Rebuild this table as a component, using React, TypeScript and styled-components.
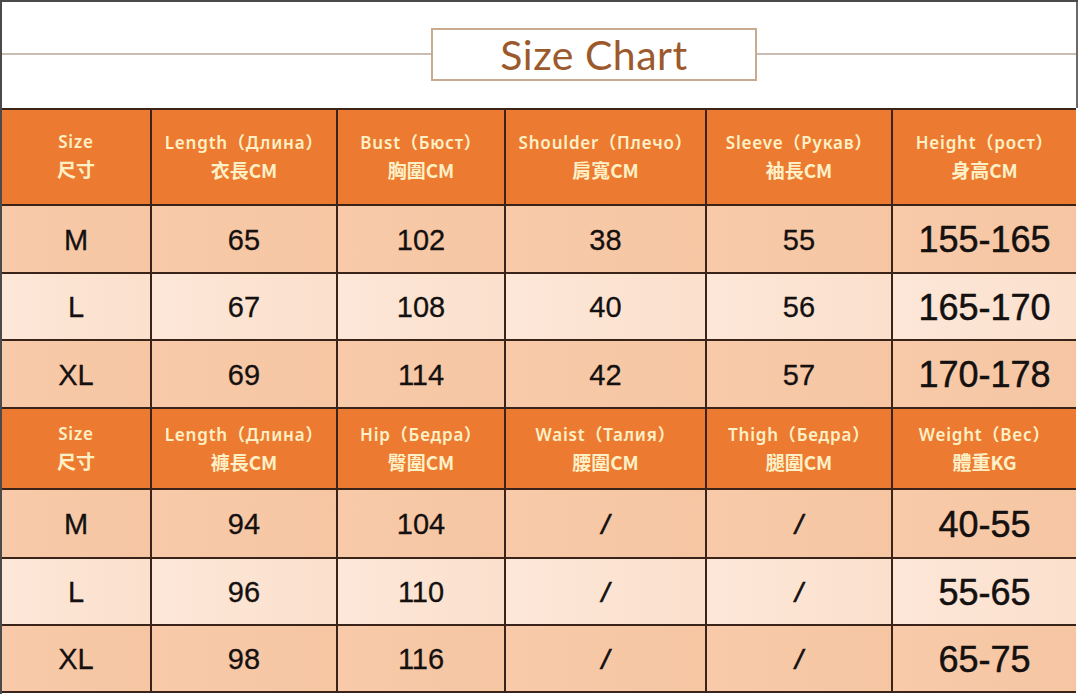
import styled, { createGlobalStyle } from "styled-components";

const GlobalStyle = createGlobalStyle`
  html, body {
    margin: 0;
    padding: 0;
    background: #ffffff;
  }
`;

const Frame = styled.div`
  width: 1078px;
  height: 694px;
  border-top: 2px solid #4a4a4a;
  border-left: 2px solid #4a4a4a;
  box-sizing: border-box;
  overflow: hidden;
  background: #ffffff;
`;

const TitleBand = styled.div`
  height: 106px;
  display: flex;
  align-items: center;
  padding-bottom: 2px;
  box-sizing: border-box;
  border-right: 2px solid #6a6a6a;
`;

const Rule = styled.div<{ $width?: number }>`
  flex: ${(p) => (p.$width ? `0 0 ${p.$width}px` : "1")};
  height: 2px;
  background: #c9bcb0;
`;

const TitleBox = styled.div`
  width: 326px;
  height: 53px;
  box-sizing: border-box;
  border: 2px solid #c8ab8e;
  display: flex;
  align-items: center;
  justify-content: center;
  font-family: "Lato", "Open Sans", sans-serif;
  font-size: 41px;
  color: #9c5a2c;
  letter-spacing: 0.5px;
`;

const Table = styled.div`
  display: grid;
  grid-template-columns: 148px 184px 166px 199px 184px 183px;
  grid-template-rows: 94px 66px 65px 66px 79px 67px 65px 65px;
  gap: 2px;
  padding: 2px;
  width: 1076px;
  box-sizing: border-box;
  margin-left: -2px;
  background: #3a2419;
`;

const HeadCell = styled.div`
  background: #ec7b31;
  display: flex;
  flex-direction: column;
  align-items: center;
  justify-content: center;
  gap: 5px;
  color: #fdf0c6;
  padding-bottom: 4px;
  box-sizing: border-box;
`;

const HeadEn = styled.div`
  font-family: "Noto Sans", "Noto Sans CJK SC", sans-serif;
  font-weight: 600;
  font-size: 17px;
  letter-spacing: 0.8px;
  white-space: nowrap;
`;

const HeadCn = styled.div`
  font-family: "Noto Sans CJK TC", "Noto Sans", sans-serif;
  font-weight: 700;
  font-size: 19px;
  line-height: 22px;
`;

const DataCell = styled.div<{ $light: boolean; $big?: boolean }>`
  background: ${(p) =>
    p.$light
      ? "linear-gradient(90deg, #fde7d8 0%, #fbe0cd 100%)"
      : "linear-gradient(90deg, #f8caa9 0%, #f6c6a3 100%)"};
  display: flex;
  align-items: center;
  justify-content: center;
  font-family: "Liberation Sans", Arial, sans-serif;
  font-size: ${(p) => (p.$big ? "36px" : "29px")};
  -webkit-text-stroke: ${(p) => (p.$big ? "0.5px" : "0.3px")} #141010;
  color: #141010;
  padding-top: 2px;
  box-sizing: border-box;
`;

const Slash = styled.span`
  font-style: italic;
  font-size: 28px;
  -webkit-text-stroke: 0.6px #141010;
`;

type Head = [string, string];

const head1: Head[] = [
  ["Size", "尺寸"],
  ["Length（Длина）", "衣長CM"],
  ["Bust（Бюст）", "胸圍CM"],
  ["Shoulder（Плечо）", "肩寬CM"],
  ["Sleeve（Рукав）", "袖長CM"],
  ["Height（рост）", "身高CM"],
];

const head2: Head[] = [
  ["Size", "尺寸"],
  ["Length（Длина）", "褲長CM"],
  ["Hip（Бедра）", "臀圍CM"],
  ["Waist（Талия）", "腰圍CM"],
  ["Thigh（Бедра）", "腿圍CM"],
  ["Weight（Bec）", "體重KG"],
];

const rows1 = [
  ["M", "65", "102", "38", "55", "155-165"],
  ["L", "67", "108", "40", "56", "165-170"],
  ["XL", "69", "114", "42", "57", "170-178"],
];

const rows2 = [
  ["M", "94", "104", "/", "/", "40-55"],
  ["L", "96", "110", "/", "/", "55-65"],
  ["XL", "98", "116", "/", "/", "65-75"],
];

const Section = ({ heads, rows }: { heads: Head[]; rows: string[][] }) => (
  <>
    {heads.map(([en, cn], i) => (
      <HeadCell key={"h" + i}>
        <HeadEn>{en}</HeadEn>
        <HeadCn>{cn}</HeadCn>
      </HeadCell>
    ))}
    {rows.map((row, r) =>
      row.map((val, c) => (
        <DataCell key={r + "-" + c} $light={r === 1} $big={c === 5}>
          {val === "/" ? <Slash>/</Slash> : val}
        </DataCell>
      ))
    )}
  </>
);

const App = () => {
  return (
    <Frame>
      <GlobalStyle />
      <TitleBand>
        <Rule $width={429} />
        <TitleBox>Size Chart</TitleBox>
        <Rule />
      </TitleBand>
      <Table>
        <Section heads={head1} rows={rows1} />
        <Section heads={head2} rows={rows2} />
      </Table>
    </Frame>
  );
};

export default App;
